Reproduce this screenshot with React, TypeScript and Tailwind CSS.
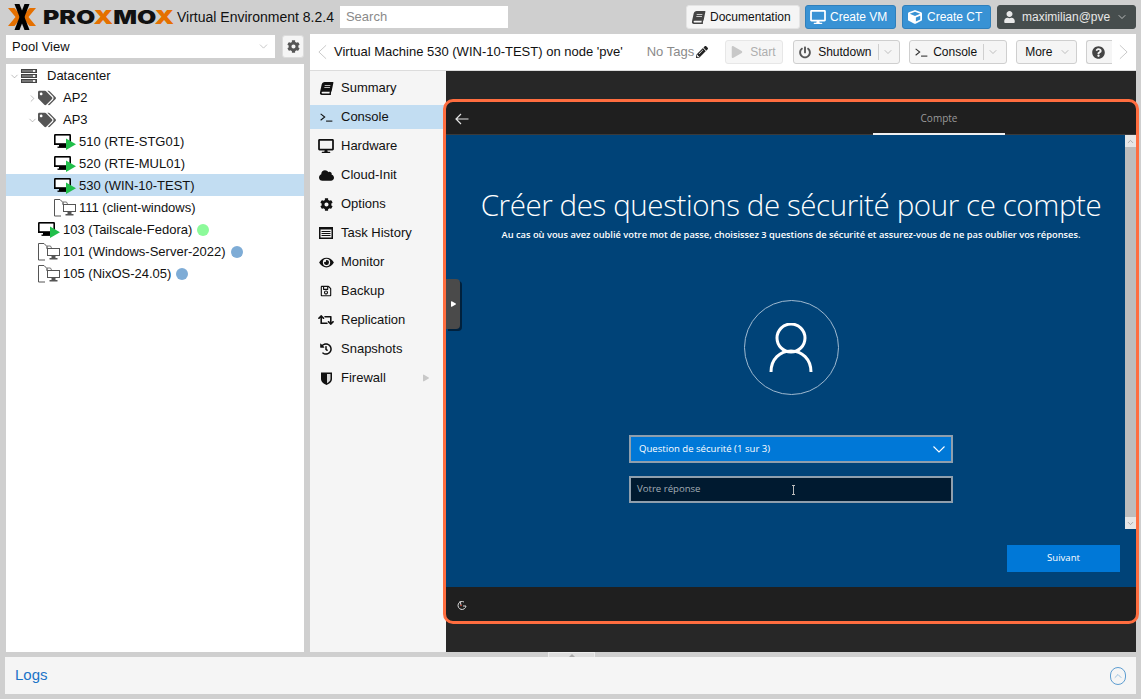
import { ChevronDown, ChevronRight, ChevronUp } from 'lucide-react';
import {
  FaBook,
  FaCloud,
  FaCog,
  FaCube,
  FaDesktop,
  FaEye,
  FaHistory,
  FaPencilAlt,
  FaPlay,
  FaPowerOff,
  FaQuestionCircle,
  FaRegSave,
  FaRetweet,
  FaTags,
  FaUser,
} from 'react-icons/fa';

const TerminalIcon = ({ className = '' }: { className?: string }) => (
  <svg viewBox="0 0 14 10" className={className} fill="none" stroke="currentColor" strokeWidth="1.2">
    <path d="M0.5 1 L5 4.5 L0.5 8" />
    <path d="M6.5 9 H13.5" />
  </svg>
);

const ListIcon = () => (
  <svg viewBox="0 0 14 12" className="w-[14px] h-3">
    <rect x="0.75" y="0.75" width="12.5" height="10.5" fill="none" stroke="#111" strokeWidth="1.5" />
    <rect x="0" y="0" width="14" height="2.5" fill="#111" />
    <path d="M2.5 4.5 H11.5 M2.5 6.5 H11.5 M2.5 8.5 H11.5" stroke="#111" strokeWidth="1" />
  </svg>
);

const ShieldIcon = () => (
  <svg viewBox="0 0 11 13" className="w-[11px] h-[13px]">
    <path d="M0 0.5 H11 V7 C11 10 8 12 5.5 13 C3 12 0 10 0 7 Z" fill="#111" />
    <path d="M6 2 H9.5 V7 C9.5 9 7.5 10.4 6 11.2 Z" fill="#d8d8d8" />
  </svg>
);

const Chevron = ({ dir, className }: { dir: 'left' | 'right'; className: string }) => (
  <svg viewBox="0 0 10 16" className={className} fill="none" stroke="#c4c4c4" strokeWidth="1">
    <path d={dir === 'left' ? 'M9 0.5 L1 8 L9 15.5' : 'M1 0.5 L9 8 L1 15.5'} />
  </svg>
);

const ServerIcon = () => (
  <svg viewBox="0 0 16 14" className="w-4 h-[14px]">
    <rect x="0" y="0" width="16" height="4" fill="#444" />
    <rect x="0" y="5" width="16" height="4" fill="#444" />
    <rect x="0" y="10" width="16" height="4" fill="#444" />
    <rect x="1" y="1" width="14" height="2" fill="#777" />
    <rect x="1" y="6" width="14" height="2" fill="#777" />
    <rect x="1" y="11" width="14" height="2" fill="#777" />
    <rect x="12" y="1" width="2" height="2" fill="#eee" />
    <rect x="12" y="6" width="2" height="2" fill="#eee" />
    <rect x="12" y="11" width="2" height="2" fill="#eee" />
  </svg>
);

const RunningVm = () => (
  <svg viewBox="0 0 22 16" className="w-[22px] h-4 shrink-0">
    <path d="M0 1.2 Q0 0 1.2 0 H15.8 Q17 0 17 1.2 V11 H0 Z" fill="#000" />
    <rect x="1.6" y="1.6" width="13.8" height="7.6" fill="#fff" />
    <rect x="5" y="11" width="7" height="2" fill="#000" />
    <rect x="3.5" y="12.5" width="10" height="1.4" fill="#000" />
    <path d="M12 4.5 L22 10.3 L12 16 Z" fill="#21bf4b" />
  </svg>
);

const TemplateVm = () => (
  <svg viewBox="0 0 22 18" className="w-[22px] h-[18px] shrink-0">
    <path d="M7 17 H0.5 V0.5 H6 L9 3.5 V6" fill="none" stroke="#555" strokeWidth="1" />
    <path d="M9 5 V3 H12.5 L13.5 5" fill="none" stroke="#777" strokeWidth="1" />
    <rect x="9.5" y="5.5" width="12" height="7" fill="#fff" stroke="#555" strokeWidth="1" />
    <rect x="13.5" y="13" width="4" height="2" fill="#555" />
    <rect x="11.5" y="15" width="8" height="1.5" fill="#555" />
  </svg>
);

const Logo = () => (
  <div className="flex items-center h-[26px] w-[166px] shrink-0">
    <svg viewBox="0 0 28 26" className="w-7 h-[26px] shrink-0">
      <path d="M0 4 H6.5 L14 13 L6.5 22 H0 L7.5 13 Z" fill="#e57000" />
      <path d="M28 4 H21.5 L14 13 L21.5 22 H28 L20.5 13 Z" fill="#e57000" />
      <path d="M6.5 0 H11.5 L21.5 26 H16.5 Z" fill="#000" />
      <path d="M21.5 0 H16.5 L6.5 26 H11.5 Z" fill="#000" />
    </svg>
    <span className="ml-[7px] font-['Inter',sans-serif] font-black text-[19px] leading-none text-[#111] whitespace-nowrap scale-x-[1.31] origin-left">
      PRO<span className="text-[#e57000]">X</span>MO<span className="text-[#e57000]">X</span>
    </span>
  </div>
);

const HeaderBtn = ({ icon, label, className, children }: { icon: React.ReactNode; label: string; className: string; children?: React.ReactNode }) => (
  <div className={`flex items-center h-6 rounded-[3px] border text-xs ${className}`}>
    {icon}
    {label}
    {children}
  </div>
);

const TreeRow = ({
  indent,
  icon,
  label,
  selected,
  dot,
  twisty,
}: {
  indent: string;
  icon: React.ReactNode;
  label: string;
  selected?: boolean;
  dot?: string;
  twisty?: 'open' | 'closed';
}) => (
  <div className={`flex items-center h-[22px] pt-[2px] ${indent} ${selected ? 'bg-[#c2ddf2]' : ''}`}>
    {twisty === 'open' && <ChevronDown className="w-[11px] h-[11px] text-[#888] shrink-0" strokeWidth={1.2} />}
    {twisty === 'closed' && <ChevronRight className="w-[11px] h-[11px] text-[#888] shrink-0" strokeWidth={1.2} />}
    {icon}
    <span className="whitespace-nowrap">{label}</span>
    {dot && <span className={`w-3 h-3 rounded-full ml-[5px] ${dot}`} />}
  </div>
);

const MenuRow = ({ icon, label, active, arrow }: { icon: React.ReactNode; label: string; active?: boolean; arrow?: boolean }) => (
  <div className={`flex items-center h-6 mb-[5px] ${active ? 'bg-[#c2ddf2]' : ''}`}>
    <div className="w-[31px] flex justify-center text-[#111] text-sm shrink-0 pl-[1px]">{icon}</div>
    <span>{label}</span>
    {arrow && <FaPlay className="ml-auto mr-[17px] w-[6px] h-[10px] text-[#c8c8c8]" />}
  </div>
);

const ToolBtn = ({ children, className = '' }: { children: React.ReactNode; className?: string }) => (
  <div className={`flex items-center h-[24px] bg-[#f5f5f5] border border-[#cfcfcf] rounded-[3px] text-xs shrink-0 ${className}`}>
    {children}
  </div>
);

const Split = () => <span className="w-px h-4 bg-[#cfcfcf] ml-[6px]" />;
const Caret = () => <ChevronDown className="w-3 h-3 text-[#999] ml-[3px]" strokeWidth={1.2} />;

const WinScreen = () => (
  <div className="flex-1 flex flex-col min-h-0 min-w-0 font-['Open_Sans',sans-serif]">
    <div className="h-[33px] shrink-0 bg-[#1f1f1f] flex border-b border-[#3a3a3a]">
      <svg viewBox="0 0 14 12" className="w-[14px] h-3 ml-[9px] mt-[11px]" fill="none" stroke="#e4e4e4" strokeWidth="1.2">
        <path d="M13.5 6 H1 M6 1 L1 6 L6 11" />
      </svg>
      <div className="ml-[404px] w-[132px] h-[33px] pt-[2px] flex items-center justify-center text-[10px] text-[#9a9a9a] border-b-2 border-[#f0f0f0]">
        Compte
      </div>
    </div>
    <div className="h-[452px] shrink-0 bg-[#004378] flex min-w-0">
      <div className="flex-1 min-w-0 flex flex-col items-center text-white">
        <div className="mt-[50px] text-[29.5px] tracking-[-0.4px] font-light leading-[40px] whitespace-nowrap ml-[11px]">
          Créer des questions de sécurité pour ce compte
        </div>
        <div className="text-[9.3px] leading-[14px] mt-[3px] font-semibold whitespace-nowrap ml-[11px]">
          Au cas où vous avez oublié votre mot de passe, choisissez 3 questions de sécurité et assurez-vous de ne pas oublier vos réponses.
        </div>
        <div className="mt-[58px] ml-[11px] w-[95px] h-[95px] rounded-full border border-[#9fb9d0] flex items-center justify-center">
          <svg viewBox="0 0 44 50" className="w-11 h-[50px]" fill="none" stroke="#fff" strokeWidth="3">
            <circle cx="22" cy="15" r="14" />
            <path d="M2 49 C2 36 11 28 22 28 C33 28 42 36 42 49" />
          </svg>
        </div>
        <div className="mt-[40px] ml-[11px] w-[324px] h-[28px] bg-[#0078d7] border-2 border-[#8f9fad] flex items-center pl-2 text-[9.6px]">
          Question de sécurité (1 sur 3)
          <svg viewBox="0 0 12 7" className="w-3 h-[7px] ml-auto mr-[6px]" fill="none" stroke="#fff" strokeWidth="1.1">
            <path d="M0.5 0.5 L6 6 L11.5 0.5" />
          </svg>
        </div>
        <div className="mt-[13px] ml-[11px] w-[324px] h-[27px] bg-[#001a30] border-2 border-[#8f9fad] flex items-center pl-[6px] text-[9.6px] text-[#a3adb5] relative">
          Votre réponse
          <span className="absolute left-[161px] top-[7px] w-[3px] h-[10px] border-x-0 border-y border-[#bbb] after:content-[''] after:absolute after:left-[1px] after:top-0 after:w-px after:h-full after:bg-[#bbb]" />
        </div>
        <div className="mt-[42px] ml-auto mr-[5px] w-[113px] h-[27px] bg-[#0078d7] flex items-center justify-center text-[9.6px]">
          Suivant
        </div>
      </div>
      <div className="w-[11px] h-[394px] flex flex-col bg-[#bdbdbd] shrink-0">
        <div className="h-[12px] bg-[#e6e6e6] flex items-center justify-center">
          <ChevronUp className="w-[9px] h-[9px] text-[#999]" strokeWidth={2} />
        </div>
        <div className="flex-1" />
        <div className="h-[12px] bg-[#e6e6e6] flex items-center justify-center">
          <ChevronDown className="w-[9px] h-[9px] text-[#999]" strokeWidth={2} />
        </div>
      </div>
    </div>
    <div className="flex-1 bg-[#1f1f1f] flex items-center pl-[10px] pt-[4px]">
      <svg viewBox="0 0 12 12" className="w-3 h-3" fill="none" stroke="#d9d9d9" strokeWidth="1">
        <path d="M8 2 A4 4 0 1 0 10 6 H7 M4 1 L5 5" />
        <circle cx="5" cy="5.5" r="0.8" fill="#e0523f" stroke="none" />
      </svg>
    </div>
  </div>
);

export default function App() {
  return (
    <div className="w-[1141px] h-[699px] bg-[#cfcfcf] overflow-hidden font-['Liberation_Sans',Arial,sans-serif] text-[13px] text-[#111] flex flex-col">
      {/* top bar */}
      <header className="h-[34px] shrink-0 flex items-center pl-2 pr-[5px]">
        <Logo />
        <span className="ml-[3px] text-sm whitespace-nowrap">Virtual Environment 8.2.4</span>
        <div className="ml-[6px] w-[168px] h-[22px] bg-white flex items-center pl-[6px] text-[13px] text-[#8a8a8a]">Search</div>
        <HeaderBtn
          className="ml-auto w-[114px] pl-[5px] gap-[5px] bg-[#f5f5f5] border-[#e4e4e4]"
          icon={<FaBook className="w-[13px] h-[13px] text-[#444] -skew-x-[12deg]" />}
          label="Documentation"
        />
        <HeaderBtn
          className="ml-[5px] w-[91px] pl-1 gap-[4px] bg-[#3892d4] border-[#2f7fbb] text-white"
          icon={<FaDesktop className="w-4 h-[14px]" />}
          label="Create VM"
        />
        <HeaderBtn
          className="ml-[6px] w-[89px] pl-[5px] gap-[5px] bg-[#3892d4] border-[#2f7fbb] text-white"
          icon={<FaCube className="w-[14px] h-[14px]" />}
          label="Create CT"
        />
        <HeaderBtn
          className="ml-[6px] w-[139px] pl-[6px] gap-[7px] bg-[#464d4d] border-[#464d4d] text-[#e8e8e8]"
          icon={<FaUser className="w-[11px] h-[12px]" />}
          label="maximilian@pve"
        >
          <ChevronDown className="w-3 h-3 text-[#ddd] -ml-[1px]" strokeWidth={1.5} />
        </HeaderBtn>
      </header>

      <div className="h-[618px] shrink-0 flex pl-[6px] pr-[5px]">
        {/* left column */}
        <aside className="w-[298px] shrink-0 flex flex-col">
          <div className="flex h-[23px] mt-[1px]">
            <div className="w-[269px] bg-white flex items-center px-[6px]">
              Pool View
              <ChevronDown className="ml-auto w-[13px] h-[13px] text-[#aaa] -mr-[1px]" strokeWidth={1.2} />
            </div>
            <div className="ml-[7px] w-[22px] bg-[#f5f5f5] border border-[#dcdcdc] rounded-[3px] flex items-center justify-center">
              <FaCog className="w-[13px] h-[13px] text-[#555]" />
            </div>
          </div>
          <div className="mt-[6px] flex-1 bg-white">
            <TreeRow indent="pl-[3px]" twisty="open" icon={<span className="ml-[1px] mr-[10px]"><ServerIcon /></span>} label="Datacenter" />
            <TreeRow
              indent="pl-[21px]"
              twisty="closed"
              icon={<FaTags className="w-[18px] h-4 text-[#555] mr-[7px]" />}
              label="AP2"
            />
            <TreeRow
              indent="pl-[21px]"
              twisty="open"
              icon={<FaTags className="w-[18px] h-4 text-[#555] mr-[7px]" />}
              label="AP3"
            />
            <TreeRow indent="pl-[48px]" icon={<span className="mr-[3px] flex"><RunningVm /></span>} label="510 (RTE-STG01)" />
            <TreeRow indent="pl-[48px]" icon={<span className="mr-[3px] flex"><RunningVm /></span>} label="520 (RTE-MUL01)" />
            <TreeRow indent="pl-[48px]" selected icon={<span className="mr-[3px] flex"><RunningVm /></span>} label="530 (WIN-10-TEST)" />
            <TreeRow indent="pl-[48px]" icon={<span className="mr-[3px] flex"><TemplateVm /></span>} label="111 (client-windows)" />
            <TreeRow indent="pl-[32px]" dot="bg-[#8cfa9a]" icon={<span className="mr-[3px] flex"><RunningVm /></span>} label="103 (Tailscale-Fedora)" />
            <TreeRow indent="pl-[32px]" dot="bg-[#7eacd6]" icon={<span className="mr-[3px] flex"><TemplateVm /></span>} label="101 (Windows-Server-2022)" />
            <TreeRow indent="pl-[32px]" dot="bg-[#7eacd6]" icon={<span className="mr-[3px] flex"><TemplateVm /></span>} label="105 (NixOS-24.05)" />
          </div>
        </aside>

        {/* main panel */}
        <main className="ml-[6px] flex-1 flex flex-col min-w-0">
          <div className="h-[37px] shrink-0 bg-white flex items-center pl-[8px] border-b border-[#dcdcdc]">
            <Chevron dir="left" className="w-[9px] h-[16px] shrink-0" />
            <span className="ml-[7px] whitespace-nowrap">Virtual Machine 530 (WIN-10-TEST) on node 'pve'</span>
            <span className="ml-[24px] text-[#8a8a8a] whitespace-nowrap">No Tags</span>
            <FaPencilAlt className="ml-[2px] w-3 h-3 text-[#222] shrink-0" />
            <ToolBtn className="ml-[17px] w-[58px] pl-[5px] gap-[7px] text-[#9a9a9a] opacity-80 border-[#e2e2e2]">
              <FaPlay className="w-[12px] h-[12px] text-[#bbb]" />
              Start
            </ToolBtn>
            <ToolBtn className="ml-[10px] w-[107px] pl-[5px]">
              <FaPowerOff className="w-[12px] h-[13px] text-[#555] mr-[7px]" />
              Shutdown
              <Split />
              <Caret />
            </ToolBtn>
            <ToolBtn className="ml-[9px] w-[98px] pl-[5px]">
              <TerminalIcon className="w-[13px] h-[9px] text-[#333] mr-[5px]" />
              Console
              <Split />
              <Caret />
            </ToolBtn>
            <ToolBtn className="ml-[9px] w-[61px] pl-[8px]">
              More
              <ChevronDown className="w-3 h-3 text-[#999] ml-[6px]" strokeWidth={1.2} />
            </ToolBtn>
            <ToolBtn className="ml-[9px] w-[26px] pl-[5px] border-r-0 rounded-r-none">
              <FaQuestionCircle className="w-[13px] h-[13px] text-[#444]" />
            </ToolBtn>
            <Chevron dir="right" className="ml-[7px] w-[9px] h-[16px] shrink-0" />
          </div>

          <div className="flex-1 flex min-h-0">
            <nav className="w-[136px] shrink-0 bg-[#f5f5f5] pt-[5px]">
              <MenuRow icon={<FaBook className="w-[13px] h-[13px] -skew-x-[12deg]" />} label="Summary" />
              <MenuRow active icon={<TerminalIcon className="w-[13px] h-[9px]" />} label="Console" />
              <MenuRow icon={<FaDesktop className="w-[16px] h-[14px]" />} label="Hardware" />
              <MenuRow icon={<FaCloud className="w-[15px] h-[13px]" />} label="Cloud-Init" />
              <MenuRow icon={<FaCog className="w-[13px] h-[13px]" />} label="Options" />
              <MenuRow icon={<ListIcon />} label="Task History" />
              <MenuRow icon={<FaEye className="w-[15px] h-[13px]" />} label="Monitor" />
              <MenuRow icon={<FaRegSave className="w-3 h-3" />} label="Backup" />
              <MenuRow icon={<FaRetweet className="w-4 h-[14px]" />} label="Replication" />
              <MenuRow icon={<FaHistory className="w-3 h-3" />} label="Snapshots" />
              <MenuRow arrow icon={<ShieldIcon />} label="Firewall" />
            </nav>

            <section className="flex-1 min-w-0 bg-[#272727] relative pt-[31px] pb-[31px] flex">
              <WinScreen />
              {/* noVNC handle */}
              <div className="absolute left-0 top-[208px] w-[14px] h-[50px] bg-[#4a4a4a] rounded-r-[4px] shadow-[2px_2px_0_#00213d] flex items-center justify-center">
                <FaPlay className="w-[5px] h-[6px] text-white" />
              </div>
              {/* orange highlight */}
              <div className="absolute -left-[3px] -right-[3px] top-[28px] bottom-[28px] border-[3px] border-[#ff6d3f] rounded-[10px] pointer-events-none" />
            </section>
          </div>
        </main>
      </div>

      {/* logs */}
      <div className="relative mx-[5px] mt-[5px] h-[37px] bg-[#f5f5f5] flex items-center pl-[10px] text-[15px] text-[#1a73c7]">
        Logs
        <span className="ml-auto mr-[10px] w-4 h-[18px] rounded-full border border-[#5d9dd1] flex items-center justify-center">
          <ChevronUp className="w-3 h-3 text-[#5d9dd1]" strokeWidth={1.2} />
        </span>
        <div className="absolute left-[543px] -top-[5px] w-[47px] h-[5px] bg-[#dedede] border-x border-t border-[#ececec] flex justify-center">
          <span className="w-0 h-0 mt-[1px] border-x-[3px] border-x-transparent border-b-[3px] border-b-[#aaa]" />
        </div>
      </div>
    </div>
  );
}
